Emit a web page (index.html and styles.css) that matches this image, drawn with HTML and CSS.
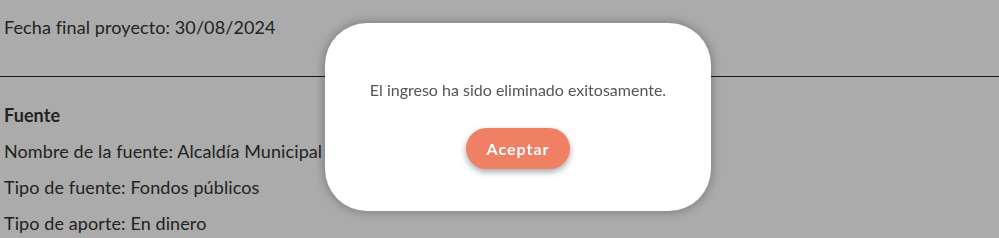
FILE: index.html
```html
<!DOCTYPE html>
<html lang="es">
  <head>
    <meta charset="UTF-8" />
    <link rel="stylesheet" href="styles.css">
    <title>Ingreso eliminado</title>
  </head>
  <body>

  <div id="detalle">
    <div class="bloque">
      <p class="dato">Fecha final proyecto: 30/08/2024</p>
    </div>
    <hr class="separador">
    <div class="bloque">
      <p class="titulo">Fuente</p>
      <p class="dato">Nombre de la fuente: Alcaldía Municipal</p>
      <p class="dato">Tipo de fuente: Fondos públicos</p>
      <p class="dato">Tipo de aporte: En dinero</p>
    </div>
  </div>

  <!-- modal de confirmacion -->
  <div id="overlay">
    <div class="modal">
      <p class="mensaje">El ingreso ha sido eliminado exitosamente.</p>
      <button class="aceptar">Aceptar</button>
    </div>
  </div>

</body>
</html>
```

FILE: styles.css
```css
* {
  box-sizing: border-box;
}
html, body {
  margin: 0;
  padding: 0;
  height: 100%;
  overflow: hidden;
}
body {
  font-family: Lato, "Noto Sans", sans-serif;
  color: #333;
  background-color: white;
}

/*===============================*/
/* Detalle del proyecto          */
/*===============================*/
#detalle {
  padding: 9px 0 0 4px;
}
.dato, .titulo {
  margin: 0;
  font-size: 18px;
  line-height: 36px;
  letter-spacing: 0.1px;
}
.titulo {
  font-weight: bold;
}
.separador {
  border: 0;
  border-top: 1px solid #222;
  margin: 31px 0 20px -4px;
}

/*===============================*/
/* Modal                         */
/*===============================*/
#overlay {
  position: fixed;
  top: 0;
  bottom: 0;
  left: 0;
  right: 0;
  background-color: rgba(0, 0, 0, 0.33);
  z-index: 5;
}
.modal {
  position: absolute;
  top: 23px;
  left: 325px;
  width: 386px;
  height: 188px;
  background-color: white;
  border-radius: 42px;
  box-shadow: 0 0 12px rgba(0, 0, 0, 0.35);
  display: flex;
  flex-direction: column;
  align-items: center;
  padding-top: 57px;
}
.mensaje {
  margin: 0;
  font-size: 16px;
  line-height: 20px;
  color: #555;
}
.aceptar {
  margin-top: 28px;
  width: 104px;
  height: 41px;
  border: 0;
  border-radius: 21px;
  background-color: #f08064;
  color: white;
  font-family: Lato, "Noto Sans", sans-serif;
  font-weight: bold;
  font-size: 16px;
  letter-spacing: 1px;
  box-shadow: 0 3px 6px rgba(0, 0, 0, 0.35);
  cursor: pointer;
}
```
